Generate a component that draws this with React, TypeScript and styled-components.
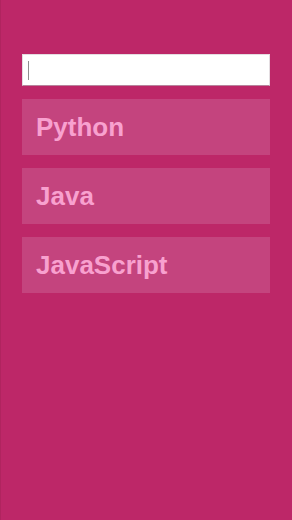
import React from "react";
import styled, { createGlobalStyle } from "styled-components";

const GlobalStyle = createGlobalStyle`
  html, body {
    margin: 0;
    padding: 0;
    background: #bd2768;
  }
  body {
    font-family: "Liberation Sans", Arial, sans-serif;
  }
`;

const Page = styled.div`
  min-height: 520px;
  box-sizing: border-box;
  padding: 54px 22px 0 21px;
  background: #bd2768;
  border-left: 1px solid #b0245f;
  display: flex;
  flex-direction: column;
  gap: 13px;
`;

const Field = styled.div`
  position: relative;
`;

const SearchInput = styled.input`
  display: block;
  box-sizing: border-box;
  width: 100%;
  height: 32px;
  margin: 0;
  padding: 0 6px;
  border: 1px solid #e4dde1;
  border-bottom-color: #b8839c;
  background: #ffffff;
  font-family: "Liberation Sans", Arial, sans-serif;
  font-size: 16px;
  color: #333;
  outline: none;
  caret-color: transparent;
`;

const Caret = styled.span`
  position: absolute;
  left: 6px;
  top: 7px;
  width: 1px;
  height: 19px;
  background: #8f8f8f;
  pointer-events: none;
`;

const List = styled.div`
  display: flex;
  flex-direction: column;
  gap: 13px;
`;

const Item = styled.div`
  box-sizing: border-box;
  height: 56px;
  padding: 0 14px;
  display: flex;
  align-items: center;
  background: #c4447e;
  color: #f8a1cf;
  font-size: 26px;
  font-weight: 700;
`;

const languages = ["Python", "Java", "JavaScript"];

export default function App() {
  return (
    <>
      <GlobalStyle />
      <Page>
        <Field>
          <SearchInput />
          <Caret />
        </Field>
        <List>
          {languages.map((lang) => (
            <Item key={lang}>{lang}</Item>
          ))}
        </List>
      </Page>
    </>
  );
}
